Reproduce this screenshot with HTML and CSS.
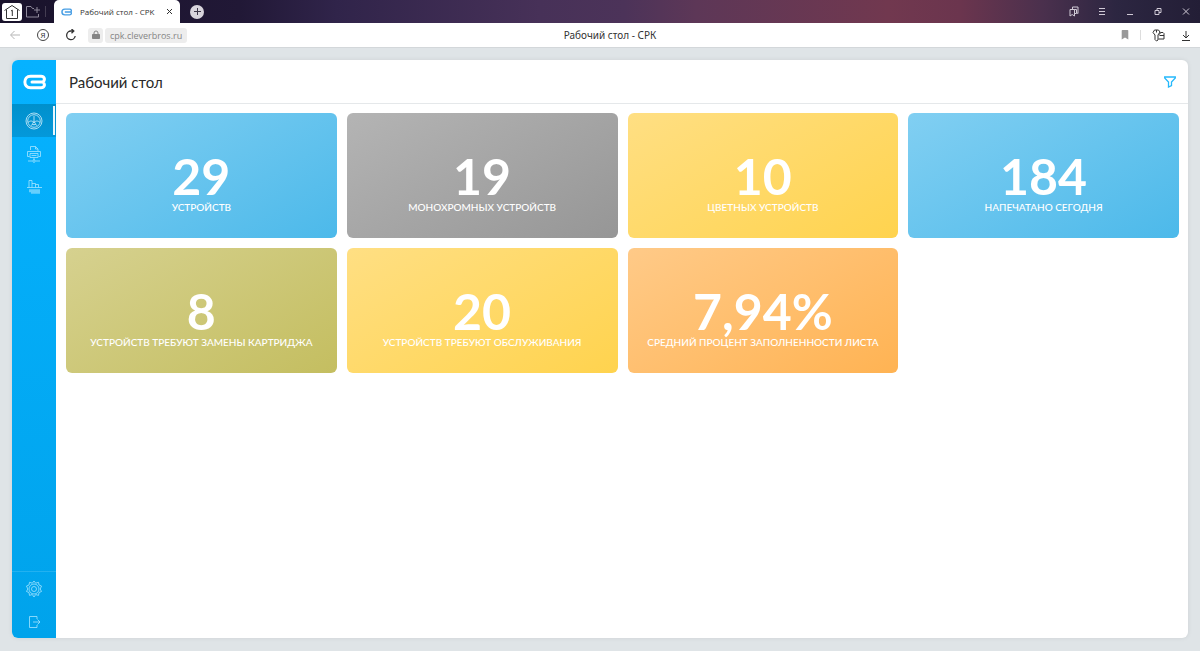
FILE: index.html
```html
<!DOCTYPE html>
<html lang="ru">
<head>
<meta charset="utf-8">
<title>Рабочий стол - CPK</title>
<link rel="stylesheet" href="styles.css">
</head>
<body>
<header class="tabbar">
  <button class="home" aria-label="Главная"><svg width="18" height="16" viewBox="0 0 18 16"><path d="M1.500 6.500 9 1.500l7.500 5M3.500 5.500v9h11v-9M8 7l1.300-.8V12" /></svg></button>
  <button class="icon-btn folder" aria-label="Новая группа"><svg width="16" height="14" viewBox="0 0 16 14"><path d="M7.500 3.500 6 1.500H1.500v10.500h12V9M7.500 3.500H9M12 2v6M9 5h6"/></svg></button>
  <span class="tab-sep"></span>
  <div class="tab">
    <svg class="tab-logo" width="11" height="8" viewBox="0 0 23 16"><path d="M20 8H8M20 8c3-2 2-6-2-6H8C0 2 0 14 8 14h10c4 0 5-4 2-6"/></svg>
    <span class="tab-title">Рабочий стол - CPK</span>
    <button class="icon-btn tab-close" aria-label="Закрыть вкладку"><svg width="7" height="7" viewBox="0 0 7 7"><path d="m1 1 5 5M6 1 1 6"/></svg></button>
  </div>
  <button class="new-tab" aria-label="Новая вкладка"><svg width="9" height="9" viewBox="0 0 9 9"><path d="M4.500 1v7M1 4.500h7"/></svg></button>
  <nav class="window-controls" aria-label="Окно">
    <button class="icon-btn" aria-label="Закладки"><svg width="10" height="11" viewBox="0 0 10 11"><path d="M1 3.500h4.500V10L3.200 8.500 1 10zM3.500 3.500V1H9v6.500L7.500 6.500M5.500 7.500V3.500M5.500 3.500h2v4h-2"/></svg></button>
    <button class="icon-btn" aria-label="Меню"><svg width="10" height="11" viewBox="0 0 10 11"><path d="M2 2.500h6M2 5.500h6M2 8.500h6"/></svg></button>
    <button class="icon-btn" aria-label="Свернуть"><svg width="10" height="11" viewBox="0 0 10 11"><path d="M2 8.500h6"/></svg></button>
    <button class="icon-btn" aria-label="Развернуть"><svg width="10" height="11" viewBox="0 0 10 11"><path d="M2 4.500h4v4H2zM4 4.500v-2h4v4H6"/></svg></button>
    <button class="icon-btn" aria-label="Закрыть"><svg width="10" height="11" viewBox="0 0 10 11"><path d="m2 2.500 6 6M8 2.500l-6 6"/></svg></button>
  </nav>
</header>
<div class="toolbar">
  <div class="toolbar-side">
    <button class="icon-btn muted" aria-label="Назад"><svg width="12" height="12" viewBox="0 0 12 12"><path d="M11 6H2M5.500 2 1.500 6l4 4"/></svg></button>
    <button class="icon-btn yandex" aria-label="Яндекс">Я</button>
    <button class="icon-btn" aria-label="Обновить"><svg class="strong" width="12" height="12" viewBox="0 0 12 12"><path d="M10.200 7A4.300 4.300 0 1 1 6 2h2.500M6.500 0l2.300 2-2.300 2.200"/></svg></button>
    <div class="address">
      <button class="lock" aria-label="Защищённое соединение"><svg width="8" height="10" viewBox="0 0 8 10"><path class="solid" d="M.500 4.500h7v4h-7z"/><path d="M2 4.500V3a2 2 0 0 1 4 0v1.500"/></svg></button>
      <a class="url" href="#">cpk.cleverbros.ru</a>
    </div>
  </div>
  <div class="page-title">Рабочий стол - СРК</div>
  <div class="toolbar-side toolbar-end">
    <button class="icon-btn bookmark" aria-label="В закладки"><svg width="8" height="10" viewBox="0 0 8 10"><path d="M1.500 0h5a.800.800 0 0 1 .800.800V9.500L4 7.500.700 9.500V.800A.800.800 0 0 1 1.500 0z"/></svg></button>
    <span class="bar-sep"></span>
    <button class="icon-btn" aria-label="Пароли и карты"><svg width="13" height="13" viewBox="0 0 13 13"><path d="M2.500 1h4L8 3 6 6v5L4.500 12 3 10.500V6L1 3.500zM4.500 1v2.500M7.500 5.500 8.500 3.500H11l1 1v5.500H6.500M7.500 6.500H12"/></svg></button>
    <button class="icon-btn" aria-label="Загрузки"><svg width="10" height="11" viewBox="0 0 10 11"><path d="M5 1v7M2 5l3 3 3-3M1 10.500h8"/></svg></button>
  </div>
</div>
<div class="stage">
  <div class="app">
    <aside class="sidebar">
      <a class="logo" href="#" aria-label="Cleverbros"><svg width="23" height="16" viewBox="0 0 23 16"><path d="M20 8H9M20 8c2.500-2.500 1.500-5.800-2-5.800H7.500c-7.500 0-7.500 11.600 0 11.600H18c3.500 0 4.500-3.300 2-5.800"/></svg></a>
      <nav class="menu">
        <a class="menu-item active" href="#" aria-label="Рабочий стол"><svg width="18" height="18" viewBox="0 0 18 18"><circle cx="9" cy="9" r="8"/><circle cx="9" cy="9" r="6.300"/><path d="M9 4v6M3 10.500c2-2 4-2 6 0 2-2 4-2 6 0M6 13.500 8 12M12 13.500 10 12"/><circle cx="9" cy="11.500" r="1.300"/></svg></a>
        <a class="menu-item" href="#" aria-label="Устройства"><svg width="16" height="18" viewBox="0 0 16 18"><path d="M4.500 5V1.500h5L12 4v2M9.500 1.500V4H12M3.500 11.500H1.500v-5h13v5h-2M4 8.500h8v4H4zM5.500 10.500h5M8 12.500v3M2 16h4M10 16h4"/><circle cx="8" cy="16" r="1.300"/></svg></a>
        <a class="menu-item" href="#" aria-label="Отчёты"><svg width="16" height="18" viewBox="0 0 16 18"><path d="M1 9.500h15M3 9.500v-7h3v7M6 5.500h3.500v4M9.500 6.500h3v3"/><path class="bars" d="M3 12h11M3 13.500h11M5 15h9"/></svg></a>
      </nav>
      <nav class="menu menu-bottom">
        <a class="menu-item" href="#" aria-label="Настройки"><svg width="18" height="18" viewBox="0 0 18 18"><path d="m9 1 1.700 2.200 2.800-.900.500 2.700 2.500 1L15.200 9l1.300 2.500-2.500 1-.500 2.900-2.800-.9L9 17l-1.700-2.500-2.800.900L4 12.500l-2.500-1L2.800 9 1.500 6 4 5l.500-2.700 2.800.900z"/><circle cx="9" cy="9" r="5"/><circle cx="9" cy="9" r="2.500"/></svg></a>
        <a class="menu-item" href="#" aria-label="Выход"><svg width="13" height="14" viewBox="0 0 13 14"><path d="M9 4V1.500H1.500v11H9V10M5 7h7M9.500 4.500 12 7 9.500 9.500"/></svg></a>
      </nav>
    </aside>
    <main class="content">
      <div class="heading">
        <h1>Рабочий стол</h1>
        <button class="icon-btn filter" aria-label="Фильтр"><svg width="12" height="12" viewBox="0 0 12 12"><path d="M.700 1h10.600v1L7.500 6v3.500L4.500 11V6L.700 2z"/></svg></button>
      </div>
      <section class="cards">
        <article class="card blue"><strong>29</strong><span>Устройств</span></article>
        <article class="card gray"><strong>19</strong><span>Монохромных устройств</span></article>
        <article class="card yellow"><strong>10</strong><span>Цветных устройств</span></article>
        <article class="card blue"><strong>184</strong><span>Напечатано сегодня</span></article>
        <article class="card olive"><strong>8</strong><span>Устройств требуют замены картриджа</span></article>
        <article class="card yellow"><strong>20</strong><span>Устройств требуют обслуживания</span></article>
        <article class="card orange"><strong>7,94%</strong><span>Средний процент заполненности листа</span></article>
      </section>
    </main>
  </div>
</div>
</body>
</html>
```
FILE: styles.css
```css
* { box-sizing: border-box; }
body {
  margin: 0;
  min-height: 100vh;
  display: flex;
  flex-direction: column;
  background: #dfe4e7;
  font-family: Lato, "Open Sans", sans-serif;
}
button { padding: 0; border: 0; background: none; font: inherit; color: inherit; cursor: pointer; }
a { color: inherit; text-decoration: none; }
svg { display: block; fill: none; stroke: currentColor; stroke-width: 1; flex: none; }

.tabbar {
  display: flex;
  align-items: center;
  height: 23px;
  padding: 0 9px 0 2px;
  color: #d0cad6;
  background: linear-gradient(90deg, #19122b 0%, #211836 20%, #30244a 28%, #473158 45%, #4c3359 52%, #5d3757 58%, #71384f 74%, #6b354e 80%, #4a304d 87%, #2c2641 93%, #231e36 100%);
}
.icon-btn { display: grid; place-items: center; }
.home { display: grid; place-items: center; width: 20px; height: 18px; border-radius: 3px; background: #fff; color: #333; }
.folder { margin-left: 3px; color: #8f899b; }
.tab-sep { width: 1px; height: 11px; margin: 0 8px 0 4px; background: #443d52; }
.tab {
  display: flex;
  align-items: center;
  align-self: stretch;
  width: 126px;
  padding: 0 7px;
  border-radius: 5px 5px 0 0;
  background: #fff;
  color: #333;
  font: 8px/12px "Open Sans", sans-serif;
}
.tab-logo { margin-right: 8px; color: #469de4; stroke-width: 3; }
.tab-title { flex: 1; white-space: nowrap; }
.new-tab { display: grid; place-items: center; width: 14px; height: 14px; margin-left: 10px; border-radius: 50%; background: #d8d4dc; color: #3b3547; }
.window-controls { display: flex; gap: 18px; margin-left: auto; }

.toolbar {
  display: flex;
  align-items: center;
  height: 25px;
  padding: 0 9px;
  border-bottom: 1px solid #d3d7da;
  background: #fff;
  color: #333;
  font: 9px/14px "Open Sans", sans-serif;
}
.toolbar-side { display: flex; flex: 1; align-items: center; gap: 16px; }
.page-title { padding-left: 20px; font-family: "Noto Sans", sans-serif; font-size: 10px; }
.toolbar-end { justify-content: flex-end; gap: 11px; }
.toolbar-end .icon-btn:last-child { margin-left: 5px; }
.muted { color: #b5b5b5; }
.strong { stroke-width: 1.3; }
.yandex { width: 12px; height: 12px; border: 1px solid #444; border-radius: 50%; font: 8px/10px "Open Sans", sans-serif; }
.address { display: flex; gap: 2px; margin-left: -5px; }
.lock { display: grid; place-items: center; width: 15px; height: 15px; border-radius: 3px; background: #ededed; color: #858585; }
.solid { fill: currentColor; }
.url { padding: 0 5px; border-radius: 3px; background: #ededed; color: #858585; line-height: 15px; }
.bookmark { color: #999; }
.bookmark svg { fill: currentColor; stroke: none; }
.bar-sep { width: 1px; height: 10px; background: #ddd; }

.stage { display: flex; flex: 1; padding: 12px 12px 13px; }
.app { display: flex; flex: 1; border-radius: 6px; background: #fff; overflow: hidden; box-shadow: 0 0 5px rgba(0, 0, 0, .08); }
.sidebar {
  display: flex;
  flex-direction: column;
  width: 44px;
  color: #a6e4ff;
  background: linear-gradient(#06b2ff, #00a3eb);
}
.logo { display: grid; place-items: center; height: 44px; color: #fff; }
.logo svg { stroke-width: 3; stroke-linecap: round; }
.menu-item { display: grid; place-items: center; height: 33px; }
.menu-item svg { stroke-width: .8; }
.bars { opacity: .6; stroke-width: 1.5; }
.active { position: relative; color: #d4f0fb; background: linear-gradient(#0090cc, #0498da); }
.active::after { content: ""; position: absolute; top: 2px; right: 1px; bottom: 2px; width: 2px; background: #e8f7fe; }
.menu-bottom { margin-top: auto; border-top: 1px solid #22b1f0; }

.content { flex: 1; min-width: 0; }
.heading { display: flex; align-items: center; justify-content: space-between; height: 44px; padding: 0 12px 0 13px; border-bottom: 1px solid #e5e8ea; }
h1 { margin: 0; color: #292929; font-size: 15px; line-height: 20px; font-weight: 400; }
.filter { color: #25b8fb; }
.filter svg { stroke-width: 1.3; }
.cards { display: grid; grid-template-columns: repeat(4, 1fr); gap: 10px; padding: 9px 9px 9px 10px; }
.card {
  display: flex;
  flex-direction: column;
  align-items: center;
  justify-content: center;
  min-height: 125px;
  padding: 12px 10px 0;
  border-radius: 6px;
  color: #fff;
  text-align: center;
}
.card strong { font-size: 50px; line-height: 50px; font-weight: 700; }
.card span { font-size: 10px; line-height: 12px; font-weight: 500; text-transform: uppercase; }
.blue { background: linear-gradient(150deg, #81cff2, #4cb9ea); }
.gray { background: linear-gradient(150deg, #b4b4b4, #969696); }
.yellow { background: linear-gradient(150deg, #ffdf83, #ffd34e); }
.olive { background: linear-gradient(150deg, #d6d18f, #c4be60); }
.orange { background: linear-gradient(150deg, #ffca88, #ffb353); }
```
